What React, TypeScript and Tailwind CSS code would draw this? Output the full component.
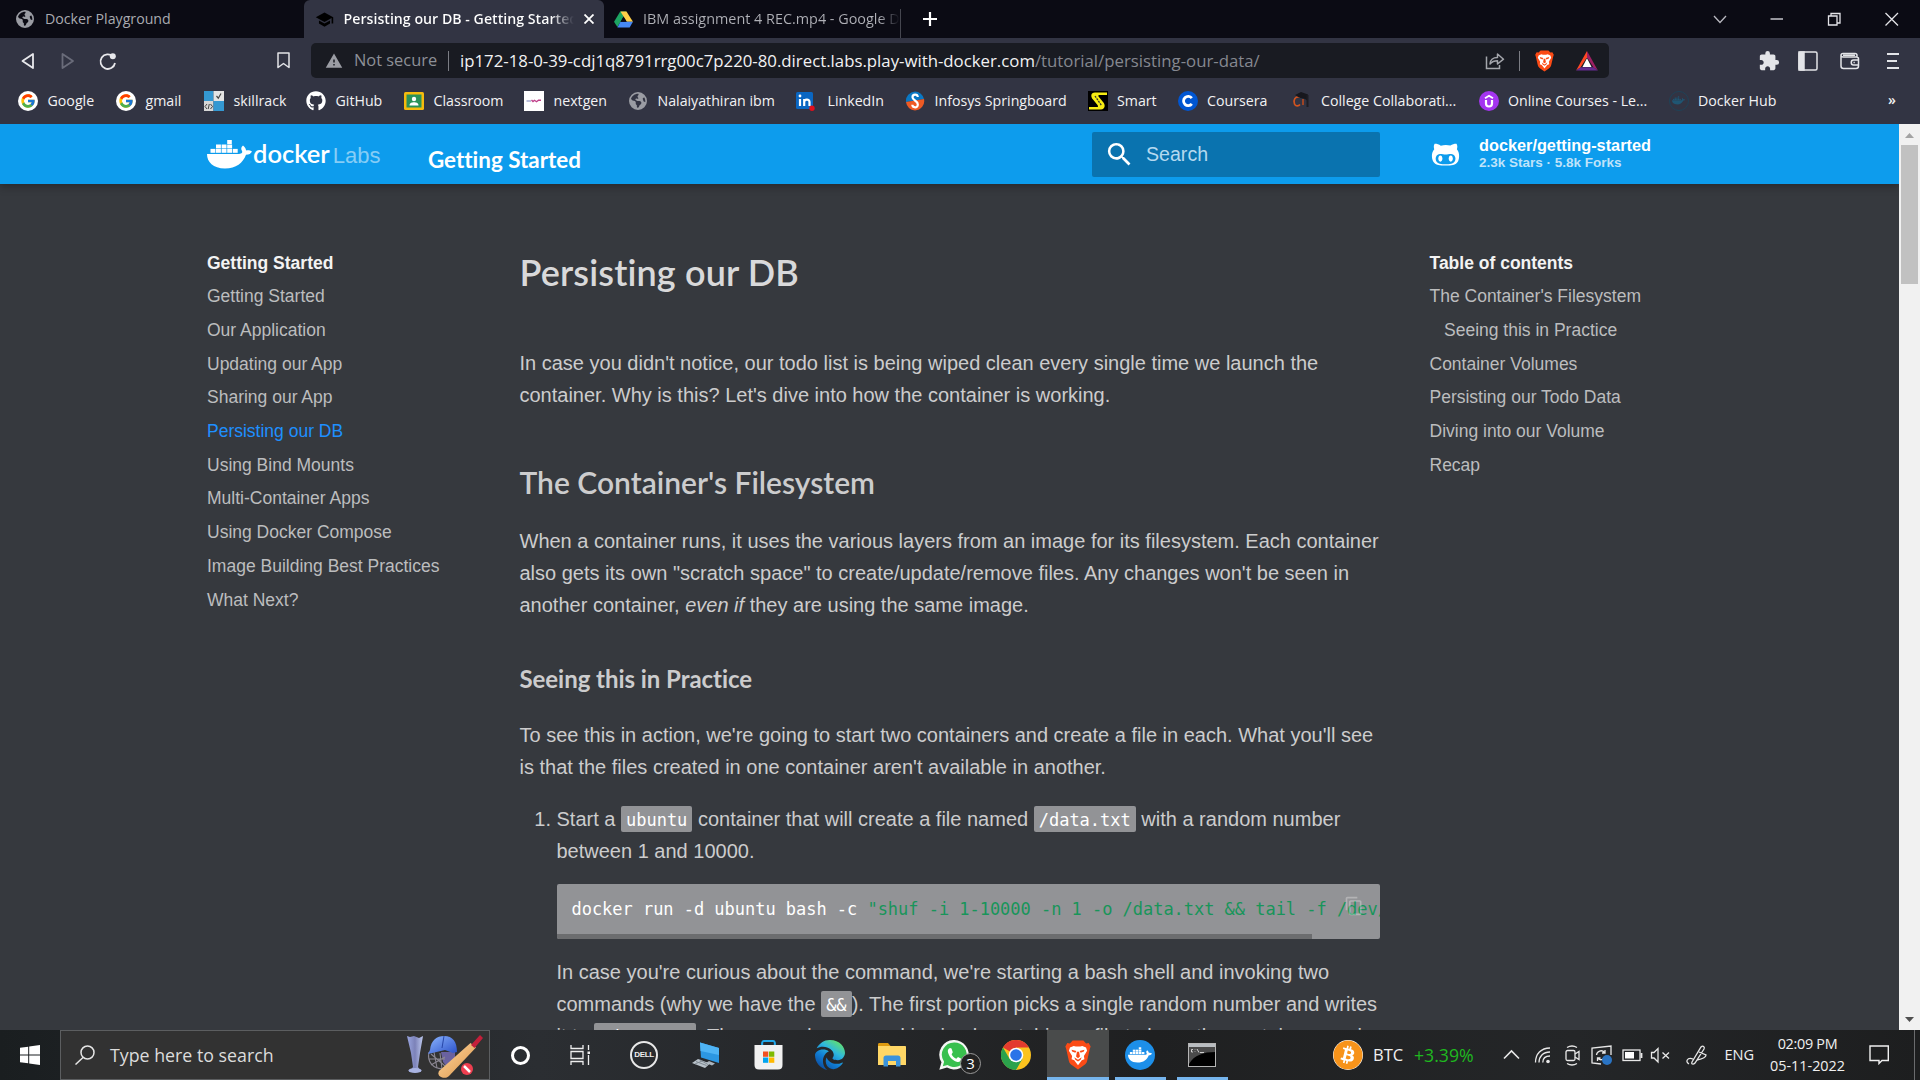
import React from 'react';
import type { ReactNode } from 'react';
import { FaGithub, FaGithubAlt, FaEarthAmericas, FaEdge, FaWhatsapp, FaBitcoin } from 'react-icons/fa6';
import { FcGoogle } from 'react-icons/fc';
import { MdSchool, MdSearch, MdExtension, MdWarning, MdContentCopy } from 'react-icons/md';

/* ---------- icons ---------- */

const Whale = ({ className }: { className: string }) => (
  <svg viewBox="0 0 45 29" className={className} fill="currentColor">
    <rect x="20.2" y="0" width="4.6" height="4" />
    {[9, 14.6, 20.2].map((x) => (
      <rect key={x} x={x} y="4.5" width="4.9" height="3.9" />
    ))}
    {[3.5, 9, 14.6, 20.2, 25.8].map((x) => (
      <rect key={x} x={x} y="8.9" width="4.9" height="3.9" />
    ))}
    <path d="M0 14H31C34 14 36 13 35 11C33.8 9 34 7 36 5.5C38 7 39 9 39 10.5C41 10 43.500 10.500 45 11.500C44 13.500 42 14.800 39 14.800C36 23 29 28.500 18 28.500C6 28.500 0 22 0 14Z" />
  </svg>
);

const Drive = () => (
  <svg viewBox="0 0 20 18" className="h-[17px] w-[19px]">
    <path d="M6.500 0.500H13L8 9.500L3.500 17L0 11.500Z" fill="#1da462" />
    <path d="M6.800 0.500H13.200L20 11.500H13.500Z" fill="#ffcf48" />
    <path d="M6.800 11.500H20L16.500 17.500H3.500Z" fill="#4688f4" />
    <path d="M10 6.200L13.200 11.500H6.900Z" fill="#0b0b14" />
  </svg>
);

const Brave = ({ className }: { className: string }) => (
  <svg viewBox="0 0 24 28" className={className}>
    <path d="M7 0.500H17L19.500 3.300L22 2.900L23.800 6L23 8.500L20.500 19.500C20 21.500 19 22.500 17.500 23.500L12 27.500L6.500 23.500C5 22.500 4 21.500 3.500 19.500L1 8.500L0.200 6L2 2.900L4.500 3.300Z" fill="#fb4b16" />
    <path d="M4.500 7L8 5.500L10 6H14L16 5.500L19.500 7L20.500 10L17.500 15L18 18L15.500 19L12 23.500L8.500 19L6 18L6.500 15L3.500 10Z" fill="#fff" />
    <path d="M6 9L10.500 10.200L9.500 12L6.500 10.800ZM18 9L13.500 10.200L14.500 12L17.500 10.800ZM11 11H13L13.800 15.500L12 17L10.200 15.500ZM8.500 16L12 18.500L15.500 16L14.500 18.500L12 20L9.500 18.500Z" fill="#fb4b16" />
  </svg>
);

const Bat = () => (
  <svg viewBox="0 0 24 22" className="h-5 w-[22px]">
    <path d="M12 0L0 21.500L5 18L12 7Z" fill="#ff4724" />
    <path d="M12 0L24 21.500L19 18L12 7Z" fill="#9e1f63" />
    <path d="M0 21.500H24L19 18H5Z" fill="#662d91" />
    <path d="M12 8L17 17.500H7Z" fill="#fff" />
  </svg>
);

const Skillrack = () => (
  <svg viewBox="0 0 20 20" className="size-5">
    <rect width="9.500" height="10" fill="#3498d2" />
    <rect x="9.500" width="10.500" height="10" fill="#e4e4e4" />
    <rect y="10" width="9.500" height="10" fill="#d6d6d6" />
    <rect x="9.500" y="10" width="10.500" height="10" fill="#3498d2" />
    <path d="M12.500 5L14.300 7.200L17 2.500" stroke="#444" strokeWidth="1.200" fill="none" />
    <path d="M3 13L1 15.500L3 18M6.500 13L8.500 15.500L6.500 18M5.300 13L4.200 18" stroke="#333" strokeWidth="0.900" fill="none" />
  </svg>
);

const Classroom = () => (
  <svg viewBox="0 0 20 20" className="size-5">
    <rect y="1" width="20" height="18" rx="1.500" fill="#f6bb0d" />
    <rect x="2.500" y="3.500" width="15" height="13" fill="#2a9258" />
    <circle cx="10" cy="8" r="2.200" fill="#fff" />
    <path d="M5.500 14.500C5.500 12 8 11.300 10 11.300S14.500 12 14.500 14.500Z" fill="#fff" />
  </svg>
);

const Nextgen = () => (
  <svg viewBox="0 0 20 20" className="size-5">
    <rect width="20" height="20" fill="#fff" />
    <path d="M2.500 10H7" stroke="#8d95c5" strokeWidth="1.200" />
    <path d="M7.500 9L9 10.500L10.500 9.300L12.500 10.700L14.500 9.200L17 9.300" stroke="#c0408a" strokeWidth="1.400" fill="none" />
  </svg>
);

const LinkedIn = () => (
  <svg viewBox="0 0 20 20" className="size-5 overflow-visible">
    <rect x="-2" y="1" width="17" height="17" rx="1.500" fill="#0a66c2" />
    <path d="M2 8V15M6.200 15V8M6.200 11C6.200 8 11.500 7.500 11.500 11V15" stroke="#fff" strokeWidth="2.200" fill="none" />
    <circle cx="2" cy="5" r="1.400" fill="#fff" />
    <circle cx="14" cy="17.300" r="2.700" fill="#e0101c" />
  </svg>
);

const Infosys = () => (
  <svg viewBox="0 0 20 20" className="size-5">
    <path d="M10 0.500A9.500 9.500 0 0 0 1 11L19 8A9.500 9.500 0 0 0 10 0.500Z" fill="#0a78c4" />
    <path d="M19 8A9.500 9.500 0 0 1 10 19.500A9.500 9.500 0 0 1 1 11Z" fill="#ee5a24" />
    <path d="M12.800 6C12.500 2.800 7.500 2.800 7.500 6.200S12.800 9.500 12.800 13.500S7.500 17 7.300 13.800" stroke="#fff" strokeWidth="2.200" fill="none" />
  </svg>
);

const Smart = () => (
  <svg viewBox="0 0 20 20" className="size-5">
    <rect width="20" height="20" fill="#000" />
    <path d="M19 1.500H7C2.500 1.500 2.500 6 5 8.500L9.500 14C10.500 15.500 10 16 9 16H1V18.500H13C17.500 18 17.500 13.500 15 11L10.500 5.500C10 4.500 10.500 4 11.500 4H19Z" fill="#f6ec13" />
    <path d="M7 5L13.500 14.500" stroke="#333" strokeWidth="1.300" strokeDasharray="2 1" />
  </svg>
);

const Coursera = () => (
  <svg viewBox="0 0 20 20" className="size-5">
    <circle cx="10" cy="10" r="10" fill="#0056d2" />
    <path d="M13.800 7.200A4.600 4.600 0 1 0 13.800 12.800" stroke="#fff" strokeWidth="2.800" fill="none" />
  </svg>
);

const College = () => (
  <svg viewBox="0 0 20 20" className="size-5">
    <path d="M8 6C3 5 1 9 2.500 13C3.500 15.500 6.500 15.500 8 13.500" stroke="#d3541f" strokeWidth="1.700" fill="none" />
    <path d="M11 8V14" stroke="#b9491f" strokeWidth="1.600" />
    <path d="M3 4L9 1L16 3.500V10L13 8L7 6.500Z" fill="#17171d" />
    <path d="M15.500 4V16" stroke="#1d1d24" strokeWidth="2" />
  </svg>
);

const Udemy = () => (
  <svg viewBox="0 0 20 20" className="size-5">
    <circle cx="10" cy="10" r="10" fill="#a435f0" />
    <path d="M7 9V12.500C7 16.500 13 16.500 13 12.500V9" stroke="#fff" strokeWidth="2.200" fill="none" />
    <path d="M6 7.300L10 4.800L14 7.300" stroke="#fff" strokeWidth="1.800" fill="none" />
  </svg>
);

const DockerFaint = () => (
  <div className="flex size-5 items-center justify-center rounded-full border border-[#1f4257] text-[#1f5673]">
    <Whale className="h-[9px] w-[13px]" />
  </div>
);

const Bookmark = () => (
  <svg viewBox="0 0 13 17" className="h-[17px] w-[13px]" fill="none" stroke="#e3e4e8" strokeWidth="1.500">
    <path d="M1 1H12V15.500L6.500 11.500L1 15.500Z" strokeLinejoin="round" />
  </svg>
);

const Share = () => (
  <svg viewBox="0 0 20 18" className="h-[18px] w-5" fill="none" stroke="#a4a6ac" strokeWidth="1.500">
    <path d="M1.500 4.500V16.500H14.500V13" />
    <path d="M5 12C5 8 8 5.500 12.500 5.500V2L18.500 7.200L12.500 12V8.800C9 8.800 7 9.500 5 12Z" strokeLinejoin="round" />
  </svg>
);

const Wallet = () => (
  <svg viewBox="0 0 20 18" className="h-[18px] w-5" fill="none" stroke="#e3e4e8" strokeWidth="1.500">
    <path d="M17 5V3.500C17 2 16 1.500 15 1.500H3C1.500 1.500 1 2.500 1 3.500V14C1 16 2 16.500 3.500 16.500H16C18 16.500 18.500 15.500 18.500 14V7C18.500 5.500 17.500 5 16.500 5H3C1.500 5 1 4.500 1 3.500M15 3.300H3" />
    <path d="M19 8H13.500C10.500 8 10.500 13 13.500 13H19M13.500 10.500H14.800" />
  </svg>
);

const Cricket = () => (
  <svg viewBox="0 0 76 44" className="h-11 w-[76px]">
    <defs>
      <linearGradient id="cup" x1="0" x2="1">
        <stop offset="0" stopColor="#9aa6e0" />
        <stop offset="0.500" stopColor="#7c82b8" />
        <stop offset="1" stopColor="#c0cbf0" />
      </linearGradient>
      <linearGradient id="helmet" x1="0" y1="0" x2="1" y2="1">
        <stop offset="0" stopColor="#8db6ff" />
        <stop offset="1" stopColor="#2a50c8" />
      </linearGradient>
      <linearGradient id="bat" x1="0" y1="0" x2="1" y2="1">
        <stop offset="0" stopColor="#ffd9a0" />
        <stop offset="1" stopColor="#dc9448" />
      </linearGradient>
    </defs>
    <path d="M0 1L3 2L7 1L12 3L16 1L13 18L11 32L14 37H2L6 32L4 18Z" fill="url(#cup)" />
    <ellipse cx="8" cy="35.500" rx="6.500" ry="2.500" fill="#a9b3e2" />
    <path d="M34 17H48V24L40 32L36 27Z" fill="#6a62a0" />
    <path d="M22 17C20 26 25 34 37 34M24 19L38 31M22 24H38M27 17L30 33M33 18L35 34M24 30L38 22" stroke="#8b8792" strokeWidth="1.100" fill="none" />
    <path d="M23 15C24 5 30 1 37 1C46 1 50 7 50 17L46 18L38 15L21 19Z" fill="url(#helmet)" />
    <path d="M37 1L35 13" stroke="#2646a8" strokeWidth="1" />
    <path d="M63.500 8L69 12.500L42 41C38 45 29 42 32 36Z" fill="url(#bat)" />
    <path d="M64 10L73 0L76 3L67.500 13Z" fill="#c41f3a" />
    <circle cx="60" cy="34" r="6" fill="#ef3f50" />
    <path d="M57 31L63 37" stroke="#fff" strokeWidth="2.500" />
  </svg>
);

const Dell = () => (
  <div className="flex size-7 items-center justify-center rounded-full border-2 border-[#e8e8e8] font-['Liberation_Sans',sans-serif] text-[8px] font-bold tracking-[-0.4px] text-[#eee]">
    DELL
  </div>
);

const Computer = () => (
  <svg viewBox="0 0 28 28" className="size-7">
    <path d="M8 1.500L27 7V22L9 16.500Z" fill="#2c97e2" />
    <path d="M8 1.500L27 7V14L8.500 10Z" fill="#4fb4f5" />
    <path d="M17 20L23 22.500L20 24.500L14 22Z" fill="#aab4bd" />
    <path d="M6 18L18 22.500L13 27L0 22Z" fill="#b9c2ca" />
    <path d="M4 20.500L14.500 24.500M7.500 18.700L16 23.500M3 23L10 20" stroke="#7a848d" strokeWidth="0.900" />
  </svg>
);

const Store = () => (
  <svg viewBox="0 0 29 30" className="h-[30px] w-[29px]">
    <path d="M8.200 8V3C8.200 1.500 9 1 10 1H19C20 1 20.800 1.500 20.800 3V8" stroke="#22a7e8" strokeWidth="1.800" fill="none" />
    <path d="M0.500 5H28.500V25C28.500 28 27 29.500 24 29.500H5C2 29.500 0.500 28 0.500 25Z" fill="#f1f1f1" />
    <path d="M8.200 5V2.500M20.800 5V2.500" stroke="#22a7e8" strokeWidth="1.800" />
    <rect x="9" y="11.500" width="5.300" height="5.300" fill="#f25022" />
    <rect x="15" y="11.500" width="5.300" height="5.300" fill="#7fba00" />
    <rect x="9" y="17.500" width="5.300" height="5.300" fill="#00a4ef" />
    <rect x="15" y="17.500" width="5.300" height="5.300" fill="#ffb900" />
  </svg>
);

const Edge = () => (
  <>
    <svg className="absolute size-0">
      <defs>
        <linearGradient id="edge" x1="0.900" y1="0.100" x2="0.300" y2="1">
          <stop offset="0" stopColor="#63e06b" />
          <stop offset="0.350" stopColor="#2fb9dc" />
          <stop offset="0.650" stopColor="#1180d6" />
          <stop offset="1" stopColor="#0c4fa3" />
        </linearGradient>
      </defs>
    </svg>
    <FaEdge size={30} fill="url(#edge)" />
  </>
);

const Folder = () => (
  <svg viewBox="0 0 28 24" className="h-6 w-7">
    <path d="M0 1.500C0 0.500 0.500 0 1.500 0H10L13 3.500H0Z" fill="#dd9a10" />
    <path d="M0 3H27C27.700 3 28 3.500 28 4V22H0Z" fill="#ffd766" />
    <path d="M5.500 23.500V15C5.500 13.500 6.500 12.500 8 12.500H20C21.500 12.500 22.500 13.500 22.500 15V23.500H18V18H10V23.500Z" fill="#3a93dc" />
  </svg>
);

const Chrome = () => (
  <svg viewBox="0 0 30 30" className="size-[30px]">
    <circle cx="15" cy="15" r="15" fill="#fcc31e" />
    <path d="M15 15L2 7.500A15 15 0 0 1 28 7.500H15Z" fill="#e33b2e" />
    <path d="M2 7.500A15 15 0 0 0 15 30L21.500 18.800L15 15L8.500 18.700Z" fill="#2ba24c" />
    <circle cx="15" cy="15" r="7.300" fill="#fff" />
    <circle cx="15" cy="15" r="5.800" fill="#2b73e8" />
  </svg>
);

const WhatsApp = () => (
  <div className="relative size-[30px]">
    <svg viewBox="0 0 30 30" className="size-[30px]">
      <path d="M15.500 0A14.700 14.700 0 1 1 8 27.600L0.300 29.800L2.500 22.300A14.700 14.700 0 0 1 15.500 0Z" fill="#f4f6f4" />
      <path d="M15.500 2.400A12.300 12.300 0 1 1 8.500 24.900L3.800 26.300L5.100 21.700A12.300 12.300 0 0 1 15.500 2.400Z" fill="#38c04e" />
      <path d="M11 8C9 8.500 8.500 10.500 9 12.500C10.500 17.500 14 20.800 18.500 22C20.500 22.300 22.300 21 22.300 18.800L19 17L17.300 18.800C15.300 18 13.500 16.200 12.600 14.200L13.800 12.300L12.500 8.500Z" fill="#fff" />
    </svg>
    <span className="absolute -right-[12px] top-[13px] flex size-[21px] items-center justify-center rounded-full border border-[#999] bg-[#222] text-[15px] leading-none text-white">
      3
    </span>
  </div>
);

const Terminal = () => (
  <svg viewBox="0 0 28 24" className="h-6 w-7">
    <rect x="0.500" y="0.500" width="27" height="23" fill="#000" stroke="#b5b5b5" />
    <rect x="1" y="1" width="26" height="3" fill="#b9bdc1" />
    <path d="M1 4H27L27 9C16 9 6 12 1 21Z" fill="#4a4a4a" />
    <path d="M5 6.500H3.500V9H5M7 6.500V7M7 8.500V9M9 6L11 9.500M12 9.500H16" stroke="#ddd" strokeWidth="0.900" fill="none" />
  </svg>
);

/* ---------- browser chrome ---------- */

const TabStrip = () => (
  <div className="flex h-[38px] items-center bg-[#0b0b14] text-[14.2px]">
    <div className="flex w-[304px] items-center pl-4 text-[#a9aab0]">
      <FaEarthAmericas size={18} className="text-[#9a9ca3]" />
      <span className="ml-[11px]">Docker Playground</span>
    </div>
    <div className="flex h-full w-[300px] items-center rounded-t-[6px] bg-[#323443] pl-[11px] text-white">
      <MdSchool size={19} className="text-black" />
      <span className="ml-[9.500px] w-[230px] overflow-hidden bg-gradient-to-r from-white from-90% to-[#323443] bg-clip-text font-semibold whitespace-nowrap text-transparent">
        Persisting our DB - Getting Started
      </span>
      <svg viewBox="0 0 10 10" className="ml-[10px] size-[10px]" stroke="#fff" strokeWidth="1.800">
        <path d="M0.500 0.500L9.500 9.500M9.500 0.500L0.500 9.500" />
      </svg>
    </div>
    <div className="flex h-full w-[298px] items-center pl-[10px] text-[#a9aab0]">
      <Drive />
      <span className="ml-[10px] w-[257px] overflow-hidden bg-gradient-to-r from-[#b0b1b7] from-92% to-[#0b0b14] bg-clip-text text-[14.4px] whitespace-nowrap text-transparent">
        IBM assignment 4 REC.mp4 - Google Drive
      </span>
      <div className="mt-[9px] h-[29px] w-px bg-[#45464f]" />
    </div>
    <svg viewBox="0 0 16 16" className="ml-5 size-4" stroke="#fff" strokeWidth="2.200">
      <path d="M8 1V15M1 8H15" />
    </svg>
    <svg viewBox="0 0 186 14" className="ml-auto mr-[21.500px] h-[14px] w-[186px]" fill="none" stroke="#e4e4e8" strokeWidth="1.300">
      <path d="M1 4L7 10.500L13 4" stroke="#b9b9c0" />
      <path d="M57.500 7H70" />
      <path d="M115.500 4H124V13H115.500ZM118 4V1.500H127V11H124.500" />
      <path d="M172.500 1L185 13.500M185 1L172.500 13.500" />
    </svg>
  </div>
);

const Toolbar = () => (
  <div className="flex h-[45px] items-center text-[16.8px]">
    <svg viewBox="0 0 96 20" className="ml-5 h-5 w-24" fill="none" stroke="#e8e8ec" strokeWidth="1.800">
      <path d="M13 3V17L2.500 10Z" strokeLinejoin="round" />
      <path d="M42.500 3V17L53 10Z" stroke="#6a6c7a" strokeLinejoin="round" />
      <path d="M93 5.500A7.300 7.300 0 1 0 95 12" />
      <circle cx="92.800" cy="5.200" r="3" fill="#e8e8ec" stroke="none" />
    </svg>
    <div className="ml-[161px]">
      <Bookmark />
    </div>
    <div className="ml-[21px] flex h-[35px] w-[1298px] items-center rounded-[5px] bg-[#191b22]">
      <MdWarning size={18} className="ml-3.5 text-[#9b9da4]" />
      <span className="ml-[11px] w-[94px] text-[16.4px] text-[#8d9097]">Not secure</span>
      <span className="mr-[11px] h-5 w-px bg-[#7b7d84]" />
      <span className="whitespace-nowrap text-[#f2f2f4]">
        ip172-18-0-39-cdj1q8791rrg00c7p220-80.direct.labs.play-with-docker.com
        <span className="text-[#858890]">/tutorial/persisting-our-data/</span>
      </span>
      <div className="ml-auto flex items-center pr-[11px]">
        <Share />
        <span className="mr-[15px] ml-[14px] h-5 w-px bg-[#7b7d84]" />
        <Brave className="h-[22px] w-[19px]" />
        <span className="w-[22px]" />
        <Bat />
      </div>
    </div>
    <div className="ml-auto flex items-center pr-[21px]">
      <MdExtension size={22} className="text-[#e3e4e8]" />
      <svg viewBox="0 0 20 20" className="ml-[18px] size-5" fill="none" stroke="#e3e4e8" strokeWidth="1.500">
        <rect x="1" y="1" width="18" height="18" rx="1.500" />
        <rect x="1" y="1" width="5" height="18" fill="#e3e4e8" />
      </svg>
      <div className="ml-[22px]">
        <Wallet />
      </div>
      <svg viewBox="0 0 12 18" className="ml-[27px] h-[18px] w-3" stroke="#e3e4e8" strokeWidth="1.800">
        <path d="M0 2H12M0 9H10M0 16H12" />
      </svg>
    </div>
  </div>
);

const bookmarks: [string, ReactNode, string][] = [
  ['Google', <span className="flex size-5 items-center justify-center rounded-full bg-white"><FcGoogle size={16} /></span>, 'w-[98px]'],
  ['gmail', <span className="flex size-5 items-center justify-center rounded-full bg-white"><FcGoogle size={16} /></span>, 'w-[88px]'],
  ['skillrack', <Skillrack />, 'w-[102px]'],
  ['GitHub', <FaGithub size={20} color="#fff" />, 'w-[98px]'],
  ['Classroom', <Classroom />, 'w-[120px]'],
  ['nextgen', <Nextgen />, 'w-[104px]'],
  ['Nalaiyathiran ibm', <FaEarthAmericas size={18} color="#9a9ca3" />, 'w-[170px]'],
  ['LinkedIn', <LinkedIn />, 'w-[107px]'],
  ['Infosys Springboard', <Infosys />, 'w-[182.5px]'],
  ['Smart', <Smart />, 'w-[90px]'],
  ['Coursera', <Coursera />, 'w-[114px]'],
  ['College Collaborati...', <College />, 'w-[187px]'],
  ['Online Courses - Le...', <Udemy />, 'w-[190px]'],
  ['Docker Hub', <DockerFaint />, 'w-[120px]'],
];

const BookmarkBar = () => (
  <div className="flex h-[36px] items-center pl-[18px] text-[14.2px] whitespace-nowrap text-[#f2f2f4]">
    {bookmarks.map(([label, icon, w]) => (
      <div key={label} className={`flex shrink-0 items-center gap-[9.500px] ${w}`}>
        <span className="flex size-5 items-center justify-center">{icon}</span>
        <span>{label}</span>
      </div>
    ))}
    <span className="mr-[24px] ml-auto pb-[3px] font-semibold">»</span>
  </div>
);

/* ---------- page ---------- */

const SiteHeader = () => (
  <header className="relative z-10 flex h-[60px] shrink-0 items-center bg-[#0d9ced] text-white shadow-[0_0_4px_rgba(0,0,0,0.1),0_4px_8px_rgba(0,0,0,0.2)]">
    <Whale className="ml-[207px] h-[29px] w-[45px]" />
    <div className="flex w-[176px] items-baseline pb-[1px] pl-[1px]">
      <span className="font-[Lato] text-[25.5px] leading-[36px] font-semibold">docker</span>
      <span className="ml-[3px] text-[22px] text-white/50">Labs</span>
    </div>
    <span className="mt-[12px] w-[664px] font-[Lato] text-[22.4px] leading-[30px] font-bold [font-variant-ligatures:none]">Getting Started</span>
    <div className="mt-px flex h-[45px] w-[288px] items-center rounded-[2px] bg-[#0a73af]">
      <MdSearch size={31} className="ml-3" />
      <span className="ml-[11px] text-[19.6px] text-[#b4d9ef]">Search</span>
    </div>
    <FaGithubAlt size={29} className="ml-[51px]" />
    <div className="ml-[19px] flex flex-col pb-[1px] font-bold">
      <span className="text-[16.3px] leading-[18px]">docker/getting-started</span>
      <span className="text-[13.5px] leading-[17px] text-[#bfe3fa]">2.3k Stars · 5.8k Forks</span>
    </div>
  </header>
);

const nav = [
  'Getting Started', 'Our Application', 'Updating our App', 'Sharing our App', 'Persisting our DB', 'Using Bind Mounts',
  'Multi-Container Apps', 'Using Docker Compose', 'Image Building Best Practices', 'What Next?',
];
const toc = ["The Container's Filesystem", 'Seeing this in Practice', 'Container Volumes', 'Persisting our Todo Data', 'Diving into our Volume', 'Recap'];

const Code = ({ children }: { children: ReactNode }) => (
  <code className="rounded-[2px] bg-[#929396] px-[5.1px] pt-[4px] pb-[2px] font-['DejaVu_Sans_Mono',monospace] text-[17px] leading-[18px] tracking-[-0.03px] text-white">
    {children}
  </code>
);

const Article = () => (
  <article className="w-[860px] shrink-0 text-[20px] leading-[32px] whitespace-nowrap text-[#cccccd]">
    <h1 className="mt-[5.500px] font-[Lato] text-[36px] leading-[40px] font-semibold tracking-[0.15px] text-[#d9d9da] [font-variant-ligatures:none]">
      Persisting our DB
    </h1>
    <p className="mt-[55px]">
      In case you didn't notice, our todo list is being wiped clean every single time we launch the
      <br />
      container. Why is this? Let's dive into how the container is working.
    </p>
    <h2 className="mt-[53px] font-[Lato] text-[30px] leading-[36px] font-semibold [font-variant-ligatures:none]">The Container's Filesystem</h2>
    <p className="mt-[25px]">
      When a container runs, it uses the various layers from an image for its filesystem. Each container
      <br />
      also gets its own "scratch space" to create/update/remove files. Any changes won't be seen in
      <br />
      another container, <em>even if</em> they are using the same image.
    </p>
    <h3 className="mt-[43px] font-[Lato] text-[24px] leading-[30px] font-bold tracking-[-0.05px] [font-variant-ligatures:none]">Seeing this in Practice</h3>
    <p className="mt-[25px]">
      To see this in action, we're going to start two containers and create a file in each. What you'll see
      <br />
      is that the files created in one container aren't available in another.
    </p>
    <div className="mt-5 flex">
      <span className="w-[37px] pr-[5.500px] text-right">1.</span>
      <div className="w-[823px]">
        <p>
          Start a <Code>ubuntu</Code> container that will create a file named <Code>/data.txt</Code> with a random number
          <br />
          between 1 and 10000.
        </p>
        <div className="relative mt-[17px] h-[55px] overflow-hidden rounded-[2px] bg-[#929396]">
          <pre className="h-[50px] pl-[15px] font-['DejaVu_Sans_Mono',monospace] text-[17px] leading-[50px] tracking-[-0.03px] text-white">
            docker run -d ubuntu bash -c <span className="text-[#18955a]">"shuf -i 1-10000 -n 1 -o /data.txt && tail -f /dev/null"</span>
          </pre>
          <div className="h-[5px] w-[755px] bg-[#6c6d6f]" />
          <MdContentCopy size={20} className="absolute top-3 right-4 text-white/30" />
        </div>
        <p className="mt-[17px]">
          In case you're curious about the command, we're starting a bash shell and invoking two
          <br />
          commands (why we have the <Code>&&</Code>). The first portion picks a single random number and writes
          <br />
          it to <Code>/data.txt</Code>. The second command is simply watching a file to keep the container running.
        </p>
      </div>
    </div>
  </article>
);

const Scrollbar = () => (
  <div className="flex w-[21px] shrink-0 flex-col items-center bg-[#f1f1f1]">
    <svg viewBox="0 0 21 21" className="size-[21px]" fill="#a3a3a3">
      <path d="M6 14L10.500 9L15 14Z" />
    </svg>
    <div className="h-[139px] w-[17px] bg-[#c1c1c1]" />
    <svg viewBox="0 0 21 21" className="mt-auto size-[21px]" fill="#505050">
      <path d="M6 8L10.500 13L15 8Z" />
    </svg>
  </div>
);

const Page = () => (
  <div className="flex h-[906px] overflow-hidden bg-[#36393e]">
    <div className="flex w-[1899px] flex-col overflow-hidden font-['Liberation_Sans',sans-serif]">
      <SiteHeader />
      <div className="flex min-h-0 flex-1 pt-[62.500px] pl-[207px]">
        <nav className="w-[312.500px] shrink-0 text-[17.5px] leading-[33.700px] text-[#bcbdbe]">
          <div className="font-bold text-[#f3f3f3]">Getting Started</div>
          {nav.map((item) => (
            <div key={item} className={item === 'Persisting our DB' ? 'text-[#1e90ff]' : ''}>{item}</div>
          ))}
        </nav>
        <Article />
        <nav className="ml-[50px] text-[17.5px] leading-[33.700px] text-[#bcbdbe]">
          <div className="font-bold text-[#f3f3f3]">Table of contents</div>
          {toc.map((item, i) => (
            <div key={item} className={i === 1 ? 'pl-[14.500px]' : ''}>{item}</div>
          ))}
        </nav>
      </div>
    </div>
    <Scrollbar />
  </div>
);

/* ---------- taskbar ---------- */

const Cell = ({ children, active, running }: { children: ReactNode; active?: boolean; running?: boolean }) => (
  <div className={`relative flex h-[50px] w-[62px] shrink-0 items-center justify-center ${active ? 'bg-[#494b4b]' : ''}`}>
    {children}
    {running && <div className={`absolute bottom-0 h-[3px] bg-[#76b5ed] ${active ? 'w-full' : 'w-[51px]'}`} />}
  </div>
);

const Taskbar = () => (
  <div className="flex h-[50px] items-center overflow-hidden bg-[linear-gradient(to_right,#1a1e20_0,#2b2e32_28%,#1f2021_60%,#242628_82%,#1d1e1f_100%)] text-[#f0f0f0]">
    <div className="flex w-[60px] justify-center">
      <svg viewBox="0 0 20 20" className="size-5" fill="#fff">
        <path d="M0 2.800L8.200 1.700V9.500H0ZM9.200 1.500L20 0V9.500H9.200ZM0 10.500H8.200V18.300L0 17.200ZM9.200 10.500H20V20L9.200 18.500Z" />
      </svg>
    </div>
    <div className="flex h-[50px] w-[430px] shrink-0 items-center border border-[#5c5e60] bg-[#323232]">
      <svg viewBox="0 0 20 20" className="ml-[14px] size-5" fill="none" stroke="#e6e6e6" strokeWidth="1.500">
        <circle cx="12.500" cy="7.500" r="6.500" />
        <path d="M8 12.500L0.500 19.500" />
      </svg>
      <span className="ml-[15px] text-[17.8px] text-[#dcdcdc]">Type here to search</span>
      <div className="mr-[6px] ml-auto pt-[3px]">
        <Cricket />
      </div>
    </div>
    <div className="-ml-px flex">
      <Cell><div className="size-[19px] rounded-full border-[3px] border-white" /></Cell>
      <Cell>
        <svg viewBox="0 0 20 20" className="mr-1 size-5" fill="none" stroke="#eee" strokeWidth="1.300">
          <path d="M1 0V3.500H13V0M1 20V16.500H13V20M1 6.500H13V13.500H1ZM18.500 0V5M18.500 10V20" />
          <rect x="17.500" y="6.500" width="2.500" height="2.500" fill="#eee" stroke="none" />
        </svg>
      </Cell>
      <Cell><Dell /></Cell>
      <Cell><Computer /></Cell>
      <Cell><Store /></Cell>
      <Cell><Edge /></Cell>
      <Cell><Folder /></Cell>
      <Cell><WhatsApp /></Cell>
      <Cell><Chrome /></Cell>
      <Cell active running><Brave className="h-[30px] w-[26px]" /></Cell>
      <Cell running>
        <div className="flex size-[30px] items-center justify-center rounded-full bg-[#1d8fe9] text-white">
          <Whale className="h-[16px] w-[24px]" />
        </div>
      </Cell>
      <Cell running><Terminal /></Cell>
    </div>

    <FaBitcoin size={30} className="ml-[100px] shrink-0 rounded-full bg-white text-[#f7931a]" />
    <span className="ml-[10px] w-[41px] text-[16.5px]">BTC</span>
    <span className="w-[89px] text-[17.700px] text-[#1fb81f]">+3.39%</span>
    <svg viewBox="0 0 206 24" className="h-6 w-[206px] shrink-0" fill="none" stroke="#e8e8e8" strokeWidth="1.300">
      <path d="M1 15.500L8.500 8L16 15.500" strokeWidth="1.600" />
      <path d="M32.500 19.500C32.500 11 38 5 47 5M36 19.500C36 13.500 40 9 47 9M39.800 19.500C39.800 15.500 42.500 13 47 13" />
      <circle cx="45" cy="18.500" r="1.800" fill="#e8e8e8" stroke="none" />
      <rect x="63" y="7.500" width="9" height="10" rx="1.500" />
      <path d="M72 11L76 8.500V16.500L72 14M64 4.500Q69 1.500 74 4.500M64 20.500Q69 23.500 74 20.500" />
      <path d="M108 12V3L89 5V20L98 21" />
      <path d="M93.500 12A4.500 4.500 0 0 1 101.500 9.500M102 7V10H99M102.500 13A4.500 4.500 0 0 1 95 15.500M94.500 18V15H97.500" />
      <circle cx="104" cy="17" r="5" fill="#2a74c4" stroke="none" />
      <rect x="120" y="7" width="17" height="10.500" />
      <rect x="122" y="9" width="9" height="6.500" fill="#fff" stroke="none" />
      <path d="M138.500 10V15" strokeWidth="1.800" />
      <path d="M148.500 9.500H151L155 5.500V19L151 15H148.500ZM159.500 9.500L166 15.500M166 9.500L159.500 15.500" />
      <path d="M189 19L198 4C200 2 202 4 201 6L192 20C190 22 188 21 189 19ZM190 16C184 14 182 19 186 21M196 9L203 12C203 15 199 16 194 17" />
    </svg>
    <span className="ml-[15.500px] w-[44px] text-[14.6px]">ENG</span>
    <div className="flex w-[78px] flex-col items-center text-[14.4px] leading-[22.500px] whitespace-nowrap">
      <span className="tracking-[-0.3px]">02:09 PM</span>
      <span>05-11-2022</span>
    </div>
    <svg viewBox="0 0 20 20" className="ml-[22px] h-5 w-5" fill="none" stroke="#f0f0f0" strokeWidth="1.400">
      <path d="M1 1H19.300V15.500H13L10 18.500V15.500H1Z" />
    </svg>
    <div className="mr-[5px] ml-auto h-full w-px bg-[#6a6b6d]" />
  </div>
);

export default function App() {
  return (
    <div className="h-[1080px] w-[1920px] overflow-hidden bg-[#323443] font-['Open_Sans',sans-serif]">
      <TabStrip />
      <Toolbar />
      <div className="h-[41px]">
        <BookmarkBar />
      </div>
      <Page />
      <Taskbar />
    </div>
  );
}
